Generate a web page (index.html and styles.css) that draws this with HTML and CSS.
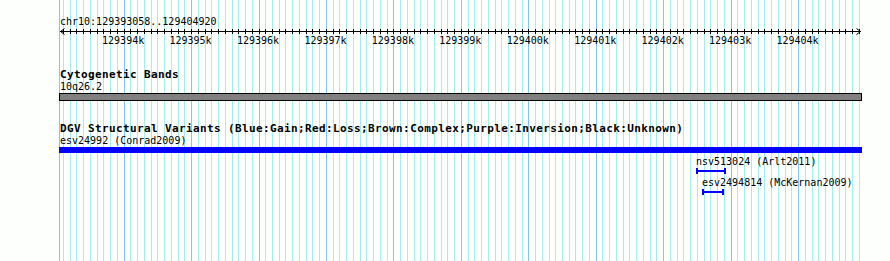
FILE: index.html
```html
<!DOCTYPE html>
<html lang="en">
<head>
  <meta charset="UTF-8">
  <title>chr10:129393058..129404920</title>
  <link rel="stylesheet" href="styles.css">
</head>
<body>
  <div class="panel">
    <svg id="grid" class="grid" width="890" height="261"></svg>
    <div class="content">
      <div class="ruler">
        <div class="ruler-title">chr10:129393058..129404920</div>
        <svg id="axis" class="ruler-axis" width="890" height="7"></svg>
        <div id="tick-labels" class="ruler-labels"></div>
      </div>

      <div class="track">
        <div class="track-title">Cytogenetic Bands</div>
        <div class="feature-label">10q26.2</div>
        <div class="band"></div>
      </div>

      <div class="track">
        <div class="track-title">DGV Structural Variants (Blue:Gain;Red:Loss;Brown:Complex;Purple:Inversion;Black:Unknown)</div>
        <div class="feature-label">esv24992 (Conrad2009)</div>
        <div class="variant-bar"></div>
        <div id="variants"></div>
      </div>
    </div>
  </div>

  <script>
    const START = 129393058;
    const END = 129404920;
    const LEFT = 60.6;
    const WIDTH = 800;
    const NS = 'http://www.w3.org/2000/svg';

    const grid = document.getElementById('grid');
    const axis = document.getElementById('axis');
    const tickLabels = document.getElementById('tick-labels');
    const variants = document.getElementById('variants');

    // bp position -> page x
    function toX(bp) {
      return LEFT + (bp - START) * WIDTH / (END - START);
    }

    function rect(parent, x, y, w, h, fill) {
      const r = document.createElementNS(NS, 'rect');
      r.setAttribute('x', x);
      r.setAttribute('y', y);
      r.setAttribute('width', w);
      r.setAttribute('height', h);
      r.setAttribute('fill', fill);
      parent.appendChild(r);
    }

    // left edge of the track area
    rect(grid, 59, 0, 1, 261, '#86c6ee');

    // grid lines and ruler ticks every 100 bp
    for (let bp = Math.ceil(START / 100) * 100; bp < END; bp += 100) {
      const x = Math.floor(toX(bp));
      const major = bp % 1000 === 0;
      rect(grid, x, 0, 1, 261, major ? '#86c6ee' : '#a8ecec');
      rect(axis, x, 1, 1, 5, '#000');

      if (major) {
        const label = document.createElement('div');
        label.className = 'tick-label';
        label.style.left = (toX(bp) - 1) + 'px';
        label.textContent = (bp / 1000) + 'k';
        tickLabels.appendChild(label);
      }
    }

    // ruler line with arrows at both ends
    rect(axis, 60, 3, 801, 1, '#000');
    axis.innerHTML += '<polyline points="64.5,0.5 60.5,3.5 64.5,6.5" fill="none" stroke="#000"/>' +
      '<polyline points="856.5,0.5 860.5,3.5 856.5,6.5" fill="none" stroke="#000"/>';

    // small structural variants below the big one
    const smallVariants = [
      { name: 'nsv513024 (Arlt2011)', x: 696, width: 30 },
      { name: 'esv2494814 (McKernan2009)', x: 702, width: 22 }
    ];

    smallVariants.forEach((v) => {
      variants.innerHTML += `
        <div class="sv" style="margin-left:${v.x - 60}px">
          <div class="feature-label">${v.name}</div>
          <div class="sv-bar" style="width:${v.width}px"></div>
        </div>
      `;
    });
  </script>
</body>
</html>
```

FILE: styles.css
```css
body {
  margin: 0;
  background-color: #fdfffd;
  font-family: "DejaVu Sans Mono", "Liberation Mono", monospace;
  color: #000;
}

.panel {
  position: relative;
  width: 890px;
  height: 261px;
  overflow: hidden;
}

.grid {
  position: absolute;
  left: 0;
  top: 0;
}

.content {
  position: relative;
  padding: 16px 0 0 60px;
}

.ruler-title,
.feature-label,
.ruler-labels {
  font-size: 10px;
  line-height: 11px;
  white-space: nowrap;
}

.ruler-title {
  line-height: 12px;
}

.ruler-axis {
  display: block;
  margin-left: -60px;
}

.ruler-labels {
  position: relative;
  height: 12px;
  margin-left: -60px;
}

.tick-label {
  position: absolute;
  top: 0;
  transform: translateX(-50%);
}

.track {
  margin-top: 21px;
}

.track-title {
  font-size: 11px;
  line-height: 13px;
  font-weight: bold;
  letter-spacing: 0.38px;
  white-space: nowrap;
}

.band {
  margin: 1px 0 0 -1px;
  width: 801px;
  height: 6px;
  border: 1px solid #000;
  background-color: #808080;
}

.variant-bar {
  margin: 1px 0 0 -1px;
  width: 803px;
  height: 6px;
  background-color: #0000ff;
}

.sv {
  margin-top: 3px;
}

.sv .feature-label {
  line-height: 12px;
}

.sv-bar {
  box-sizing: border-box;
  height: 6px;
  border-left: 2px solid #0000ff;
  border-right: 2px solid #0000ff;
  background: linear-gradient(#0000ff, #0000ff) center / 100% 2px no-repeat;
}
```
